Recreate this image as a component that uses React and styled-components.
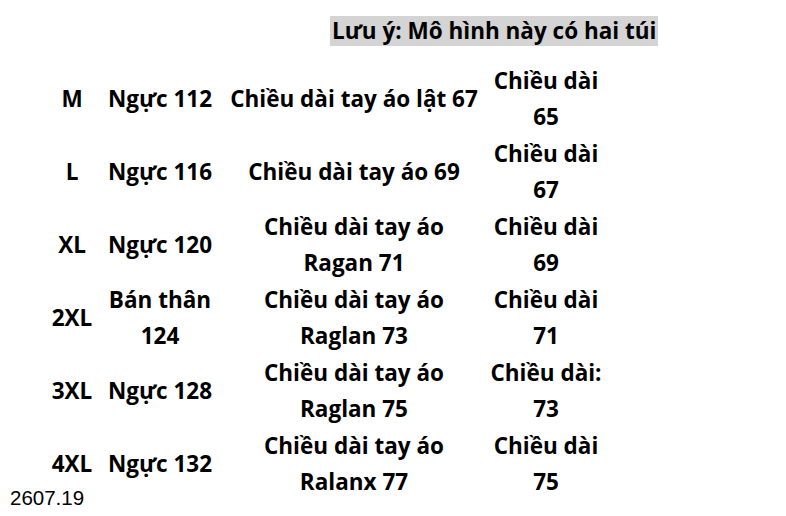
import React from 'react';
import styled, { createGlobalStyle } from 'styled-components';

const GlobalStyle = createGlobalStyle`
  body {
    margin: 0;
    background: #fff;
    font-family: "Open Sans", "Noto Sans", sans-serif;
    color: #000;
  }
`;

const Page = styled.div`
  position: relative;
  width: 786px;
  height: 516px;
  overflow: hidden;
  background: #fff;
`;

const Header = styled.div`
  display: flex;
  padding: 16px 0 0 330px;
`;

const Note = styled.div`
  background: #d4d4d4;
  height: 30px;
  line-height: 30px;
  padding: 0 2px;
  font-weight: 700;
  font-size: 22.5px;
`;

const Table = styled.div`
  display: grid;
  grid-template-columns: 56px 120px 268px 116px;
  grid-auto-rows: 73px;
  margin: 16px 0 0 44px;
`;

const Cell = styled.div`
  display: flex;
  align-items: center;
  justify-content: center;
  text-align: center;
  font-weight: 700;
  font-size: 22.5px;
  line-height: 36px;
  white-space: pre-line;
`;

const Stamp = styled.div`
  position: absolute;
  left: 10px;
  top: 486px;
  font-family: "Liberation Sans", Arial, sans-serif;
  font-size: 20.5px;
`;

const rows = [
  ['M', 'Ngực 112', 'Chiều dài tay áo lật 67', 'Chiều dài\n65'],
  ['L', 'Ngực 116', 'Chiều dài tay áo 69', 'Chiều dài\n67'],
  ['XL', 'Ngực 120', 'Chiều dài tay áo\nRagan 71', 'Chiều dài\n69'],
  ['2XL', 'Bán thân\n124', 'Chiều dài tay áo\nRaglan 73', 'Chiều dài\n71'],
  ['3XL', 'Ngực 128', 'Chiều dài tay áo\nRaglan 75', 'Chiều dài:\n73'],
  ['4XL', 'Ngực 132', 'Chiều dài tay áo\nRalanx 77', 'Chiều dài\n75'],
];

export default function App() {
  return (
    <Page>
      <GlobalStyle />
      <Header>
        <Note>Lưu ý: Mô hình này có hai túi</Note>
      </Header>
      <Table>
        {rows.map((row) =>
          row.map((text, i) => <Cell key={row[0] + i}>{text}</Cell>)
        )}
      </Table>
      <Stamp>2607.19</Stamp>
    </Page>
  );
}
